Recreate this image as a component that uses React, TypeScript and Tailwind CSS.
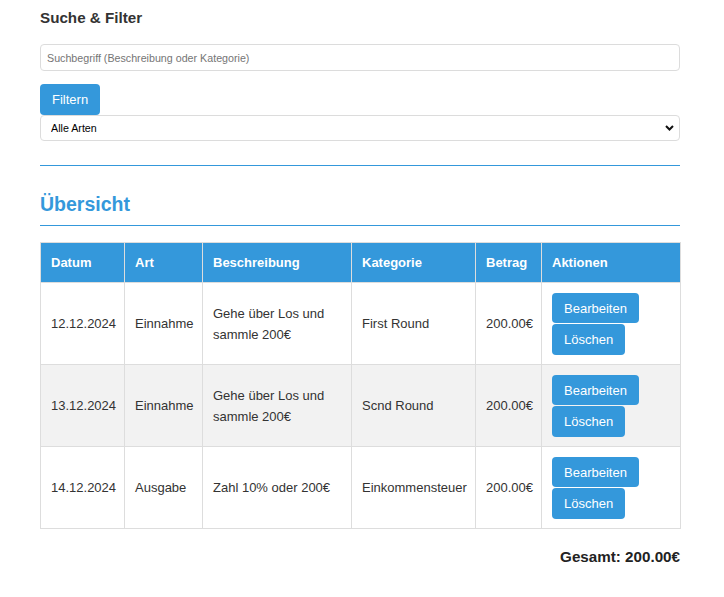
import { useState } from 'react'

type Entry = {
  datum: string
  art: string
  beschreibung: string
  kategorie: string
  betrag: string
}

const entries: Entry[] = [
  { datum: '12.12.2024', art: 'Einnahme', beschreibung: 'Gehe über Los und sammle 200€', kategorie: 'First Round', betrag: '200.00€' },
  { datum: '13.12.2024', art: 'Einnahme', beschreibung: 'Gehe über Los und sammle 200€', kategorie: 'Scnd Round', betrag: '200.00€' },
  { datum: '14.12.2024', art: 'Ausgabe', beschreibung: 'Zahl 10% oder 200€', kategorie: 'Einkommensteuer', betrag: '200.00€' },
]

const headers = ['Datum', 'Art', 'Beschreibung', 'Kategorie', 'Betrag', 'Aktionen']
const colWidths = ['w-[84px]', 'w-[78px]', 'w-[149px]', 'w-[124px]', 'w-[66px]', 'w-[139px]']

export default function App() {
  const [query, setQuery] = useState('')
  const [art, setArt] = useState('alle')

  return (
    <div className="min-h-[597px] bg-white text-[#333] font-['Liberation_Sans',Arial,sans-serif] text-[13px]">
      <div className="ml-[40px] w-[640px] pt-[9px]">
        <h3 className="text-[15.2px] font-bold leading-[18px] text-[#333]">Suche &amp; Filter</h3>

        <input
          value={query}
          onChange={(e) => setQuery(e.target.value)}
          placeholder="Suchbegriff (Beschreibung oder Kategorie)"
          className="mt-[17px] block h-[27px] w-full rounded-[4px] border border-[#dcdcdc] px-[6px] text-[10.7px] text-[#333] outline-none placeholder:text-[#757575]"
        />

        <button className="mt-[13px] block h-[31px] rounded-[4px] bg-[#3498db] px-[12px] text-[13px] text-white">
          Filtern
        </button>

        <div className="relative">
          <select
            value={art}
            onChange={(e) => setArt(e.target.value)}
            className="block h-[26px] w-full appearance-none rounded-[4px] border border-[#dcdcdc] bg-white pl-[10px] text-[10.7px] text-black outline-none"
          >
            <option value="alle">Alle Arten</option>
            <option value="einnahme">Einnahme</option>
            <option value="ausgabe">Ausgabe</option>
          </select>
          <svg className="pointer-events-none absolute right-[6px] top-[10px]" width="9" height="6" viewBox="0 0 9 6">
            <path d="M1 1 L4.5 4.5 L8 1" fill="none" stroke="#111" strokeWidth="2" />
          </svg>
        </div>

        <hr className="mt-[24px] border-0 border-t border-[#3498db]" />

        <h2 className="mt-[27px] text-[19.5px] font-bold leading-[22px] text-[#3498db]">Übersicht</h2>

        <hr className="mt-[10px] border-0 border-t border-[#3498db]" />

        <table className="mt-[16px] w-[640px] table-fixed border-collapse border border-[#ddd] leading-[21px]">
          <colgroup>
            {colWidths.map((w, i) => (
              <col key={i} className={w} />
            ))}
          </colgroup>
          <thead>
            <tr className="bg-[#3498db] text-white">
              {headers.map((h) => (
                <th key={h} className="border border-[#ddd] px-[10px] py-[9px] text-left font-bold">
                  {h}
                </th>
              ))}
            </tr>
          </thead>
          <tbody>
            {entries.map((e, i) => (
              <tr key={i} className={i % 2 === 1 ? 'bg-[#f2f2f2]' : 'bg-white'}>
                <td className="border border-[#ddd] px-[10px]">{e.datum}</td>
                <td className="border border-[#ddd] px-[10px]">{e.art}</td>
                <td className="border border-[#ddd] px-[10px]">{e.beschreibung}</td>
                <td className="border border-[#ddd] px-[10px]">{e.kategorie}</td>
                <td className="border border-[#ddd] px-[10px]">{e.betrag}</td>
                <td className="border border-[#ddd] px-[10px] pt-[10px] pb-[9px]">
                  <div className="flex flex-col items-start">
                    <button className="h-[30px] rounded-[4px] bg-[#3498db] px-[12px] text-[13px] text-white">
                      Bearbeiten
                    </button>
                    <button className="mt-[1px] h-[31px] rounded-[4px] bg-[#3498db] px-[12px] text-[13px] text-white">
                      Löschen
                    </button>
                  </div>
                </td>
              </tr>
            ))}
          </tbody>
        </table>

        <p className="mt-[19px] text-right text-[15.2px] font-bold leading-[17px] text-[#222]">Gesamt: 200.00€</p>
      </div>
    </div>
  )
}
